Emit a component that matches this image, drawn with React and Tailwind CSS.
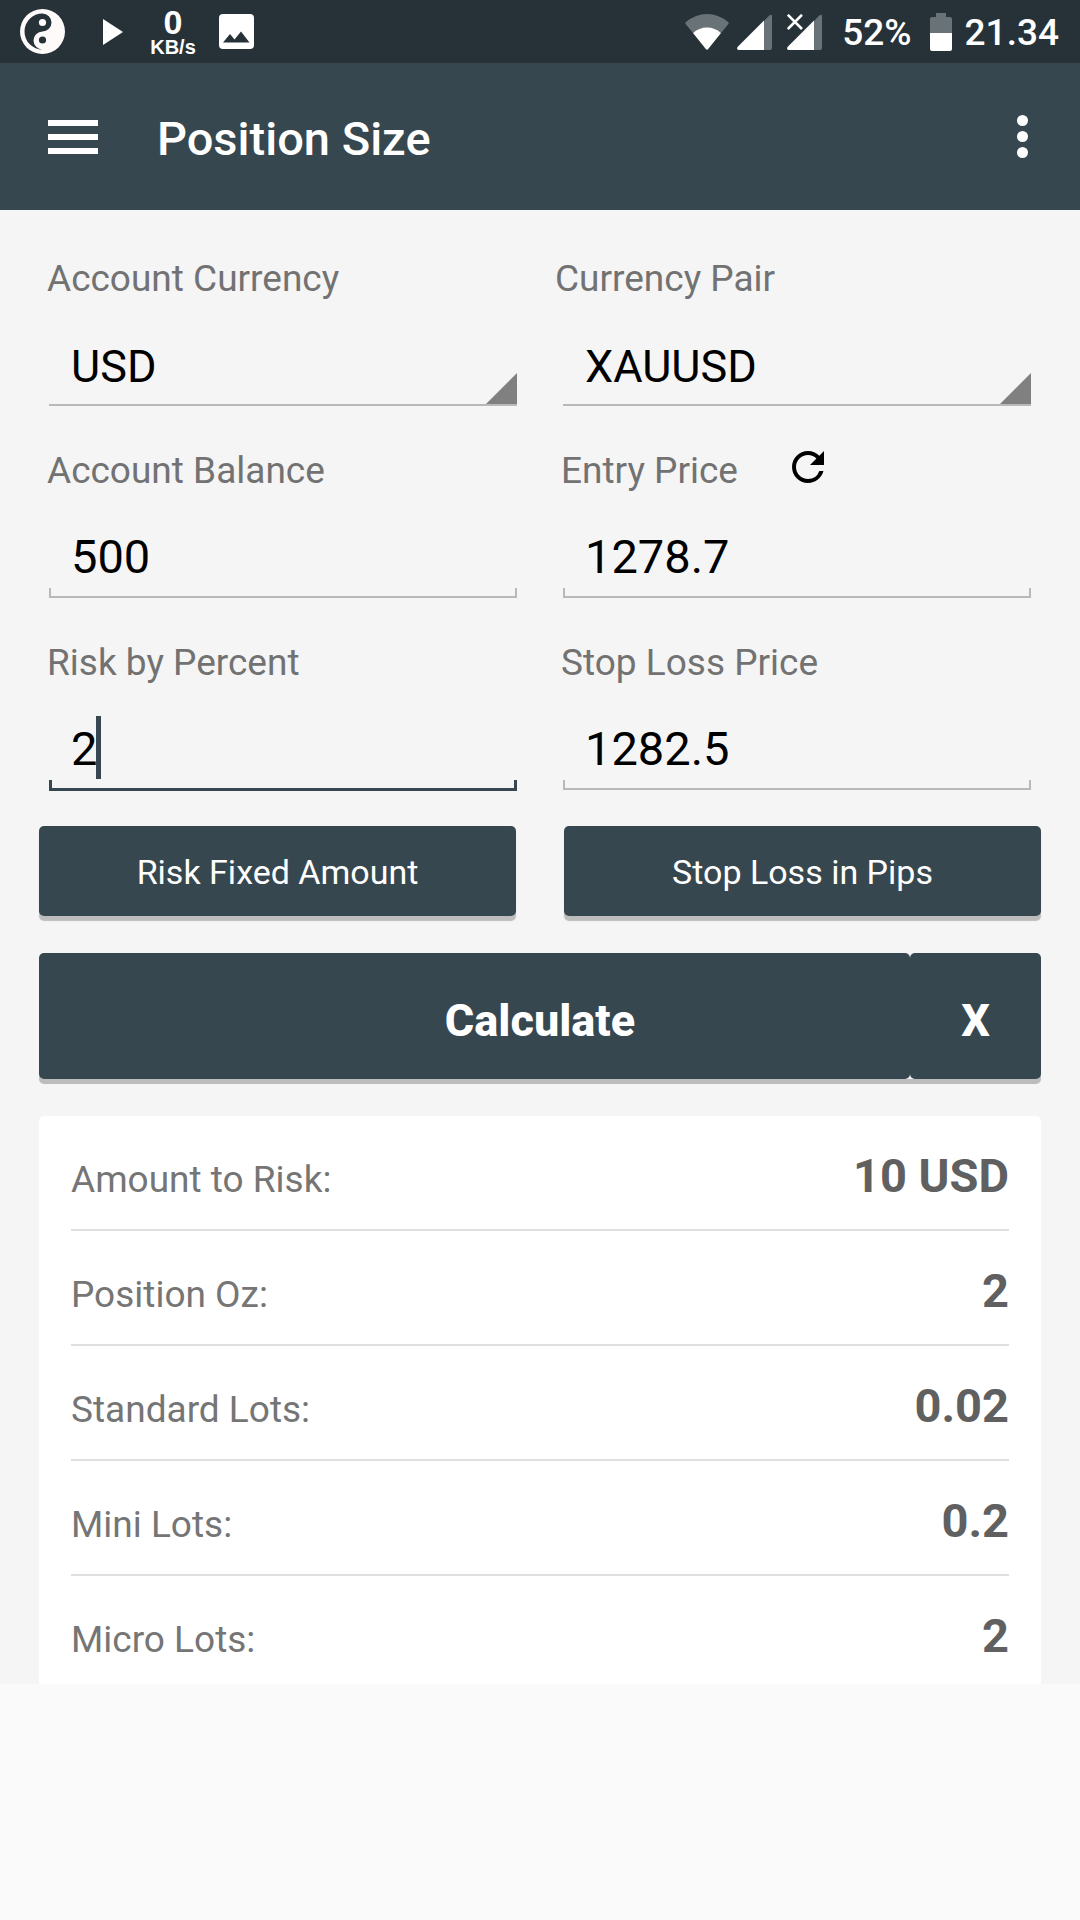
import React, { useState } from 'react';
import { MdRefresh } from 'react-icons/md';

const results = [
  { label: 'Amount to Risk:', value: '10 USD' },
  { label: 'Position Oz:', value: '2' },
  { label: 'Standard Lots:', value: '0.02' },
  { label: 'Mini Lots:', value: '0.2' },
  { label: 'Micro Lots:', value: '2' },
];

const YinYangIcon = () => (
  <svg className="w-[45px] h-[45px]" viewBox="0 0 45 45">
    <circle cx="22.5" cy="22.5" r="22.5" fill="#fffafa" />
    <path
      d="M22.5 4.5A18 18 0 0 0 22.5 40.500A9 9 0 0 1 22.5 22.5A9 9 0 0 0 22.5 4.5Z"
      fill="#263238"
    />
    <circle cx="22.5" cy="13.5" r="3.6" fill="#fffafa" />
    <circle cx="22.5" cy="31" r="3.6" fill="#263238" />
  </svg>
);

const ImageIcon = () => (
  <svg className="w-[35px] h-[35px]" viewBox="0 0 35 35">
    <rect width="35" height="35" rx="4" fill="#fff" />
    <path d="M4 28.500L11 20L15.500 25.500L22 17.500L30.500 28.500Z" fill="#263238" />
  </svg>
);

const WifiIcon = () => (
  <svg className="w-[44px] h-[36px]" viewBox="0 0 44 36">
    <path d="M0.300 8.500Q10 0 22 0T43.700 8.500Q44 9.500 43 10.500L36 19Q22 9 8 19L1 10.500Q0 9.500 0.300 8.500Z" fill="#697276" />
    <path d="M8 19Q14 13.500 22 13.500T36 19L23.200 35Q22 36.500 20.800 35Z" fill="#fff" />
  </svg>
);

const SignalIcon = ({ noData }) => (
  <svg className="w-[35px] h-[36px]" viewBox="0 0 35 36">
    <path d="M27 7L32.500 1.300Q35 0 35 2V34Q35 36 33 36H27Z" fill="#697276" />
    <path d="M27 6.500V36H1.500Q-0.500 35.500 0.500 33Z" fill="#fff" />
    {noData && (
      <path d="M0.800 0.800L15 15M15 0.800L0.800 15" stroke="#fff" strokeWidth="2.600" fill="none" />
    )}
  </svg>
);

const BatteryIcon = () => (
  <svg className="w-[22px] h-[38px]" viewBox="0 0 22 38">
    <path d="M6 0H16V4H20Q22 4 22 6V20H0V6Q0 4 2 4H6Z" fill="#697276" />
    <path d="M0 20H22V36Q22 38 20 38H2Q0 38 0 36Z" fill="#fff" />
  </svg>
);

const StatusBar = () => (
  <div className="flex items-center justify-between h-[63px] pl-5 pr-[21px] bg-[#263238] text-white">
    <div className="flex items-center">
      <YinYangIcon />
      <svg className="w-5 h-[26px] ml-[38px]" viewBox="0 0 20 26">
        <path d="M0 0L20 13L0 26Z" fill="#fff" />
      </svg>
      <div className="flex flex-col items-center w-[46px] ml-[27px] font-['Liberation_Sans',sans-serif] font-bold">
        <span className="text-[34px] leading-[30px]">0</span>
        <span className="text-[20px] leading-[20px]">KB/s</span>
      </div>
      <div className="ml-[23px]">
        <ImageIcon />
      </div>
    </div>
    <div className="flex items-center">
      <WifiIcon />
      <div className="flex gap-[15px] ml-2">
        <SignalIcon />
        <SignalIcon noData />
      </div>
      <span className="ml-5 pt-0.5 text-[37px] leading-[44px] font-medium">52%</span>
      <div className="ml-[18px]">
        <BatteryIcon />
      </div>
      <span className="ml-[13px] pt-0.5 text-[37px] leading-[44px] font-medium">21.34</span>
    </div>
  </div>
);

const Header = () => (
  <header className="flex items-center h-[147px] px-12 bg-[#37474f] text-white">
    <button type="button" aria-label="Menu" className="flex flex-col gap-2 w-[50px]">
      <span className="w-full h-1.5 bg-white" />
      <span className="w-full h-1.5 bg-white" />
      <span className="w-full h-1.5 bg-white" />
    </button>
    <h1 className="ml-[59px] pt-1 text-[47px] leading-[56px] font-medium">Position Size</h1>
    <button type="button" aria-label="More options" className="flex flex-col gap-[5px] ml-auto mr-1">
      <span className="size-[11px] rounded-full bg-white" />
      <span className="size-[11px] rounded-full bg-white" />
      <span className="size-[11px] rounded-full bg-white" />
    </button>
  </header>
);

const Label = ({ id, children, className = '-ml-0.5' }) => (
  <label htmlFor={id} className={`block text-[37px] leading-[42px] text-[#727272] ${className}`}>
    {children}
  </label>
);

const SelectField = ({ id, label, labelClass, options }) => (
  <div>
    <Label id={id} className={labelClass}>{label}</Label>
    <div className="relative border-b-2 border-[#b9b9b9]">
      <select
        id={id}
        className="block w-full h-[104px] pt-[30px] pl-[22px] appearance-none bg-transparent text-[45px] leading-[56px] text-black outline-none"
      >
        {options.map((o) => (
          <option key={o}>{o}</option>
        ))}
      </select>
      <svg className="absolute right-0 bottom-0 w-[31px] h-[31px] pointer-events-none" viewBox="0 0 31 31">
        <path d="M31 0V31H0Z" fill="#808080" />
      </svg>
    </div>
  </div>
);

const InputField = ({ id, label, value, onChange, active, action }) => (
  <div>
    <div className="flex items-center">
      <Label id={id}>{label}</Label>
      {action}
    </div>
    <div className="relative">
      <input
        id={id}
        type="text"
        inputMode="decimal"
        value={value}
        onChange={(e) => onChange(e.target.value)}
        className="block w-full h-24 pt-9 pb-1 pl-[22px] bg-transparent text-[47px] leading-[56px] text-black outline-none"
      />
      {/* text cursor */}
      {active && <span className="absolute left-[47px] bottom-3 w-[5px] h-[63px] bg-[#37474f]" />}
      <div
        className={
          active
            ? 'h-[11px] border-[3px] border-t-0 border-[#37474f]'
            : 'h-2.5 border-2 border-t-0 border-[#b9b9b9]'
        }
      />
    </div>
  </div>
);

const Button = ({ children, className }) => (
  <button
    type="button"
    className={`rounded-[5px] bg-[#37474f] text-white ${className}`}
  >
    {children}
  </button>
);

const App = () => {
  const [balance, setBalance] = useState('500');
  const [entry, setEntry] = useState('1278.7');
  const [risk, setRisk] = useState('2');
  const [stopLoss, setStopLoss] = useState('1282.5');

  return (
    <div className="min-h-screen bg-[#fafafa] font-[Roboto,sans-serif]">
      <StatusBar />
      <Header />

      <main className="flex flex-col gap-[37px] pt-12 px-[39px] bg-[#f5f5f5]">
        <div className="grid grid-cols-2 gap-x-[46px] gap-y-11 px-2.5 -mb-0.5">
          <SelectField id="currency" label="Account Currency" options={['USD', 'EUR', 'GBP']} />
          <SelectField
            id="pair"
            label="Currency Pair"
            labelClass="-ml-2"
            options={['XAUUSD', 'EURUSD', 'GBPUSD']}
          />
          <InputField id="balance" label="Account Balance" value={balance} onChange={setBalance} />
          <InputField
            id="entry"
            label="Entry Price"
            value={entry}
            onChange={setEntry}
            action={
              <button type="button" aria-label="Refresh price" className="ml-[46px] -mt-2 text-black">
                <MdRefresh size={48} className="-my-1" />
              </button>
            }
          />
          <InputField id="risk" label="Risk by Percent" value={risk} onChange={setRisk} active />
          <InputField id="stop" label="Stop Loss Price" value={stopLoss} onChange={setStopLoss} />
        </div>

        <div className="grid grid-cols-2 gap-12">
          <Button className="h-[90px] pt-0.5 text-[34px] shadow-[0_5px_1px_#bdbdbd]">Risk Fixed Amount</Button>
          <Button className="h-[90px] pt-0.5 text-[34px] shadow-[0_5px_1px_#bdbdbd]">Stop Loss in Pips</Button>
        </div>

        <div className="flex rounded-[5px] shadow-[0_5px_0_#bdbdbd]">
          <Button className="flex-1 h-[126px] pl-[131px] pt-2.5 text-[45px] font-extrabold">Calculate</Button>
          <Button className="w-[131px] h-[126px] pt-2.5 text-[45px] font-extrabold">X</Button>
        </div>

        {/* Results */}
        <dl className="px-8 rounded-t-[5px] bg-white">
          {results.map((row) => (
            <div
              key={row.label}
              className="flex items-baseline justify-between h-[115px] pt-8 border-b-2 border-[#dfdfdf] last:h-[108px] last:border-b-0"
            >
              <dt className="text-[37px] leading-[42px] text-[#757575]">{row.label}</dt>
              <dd className="text-[47px] leading-[56px] font-bold text-[#606060]">{row.value}</dd>
            </div>
          ))}
        </dl>
      </main>
    </div>
  );
};

export default App;
